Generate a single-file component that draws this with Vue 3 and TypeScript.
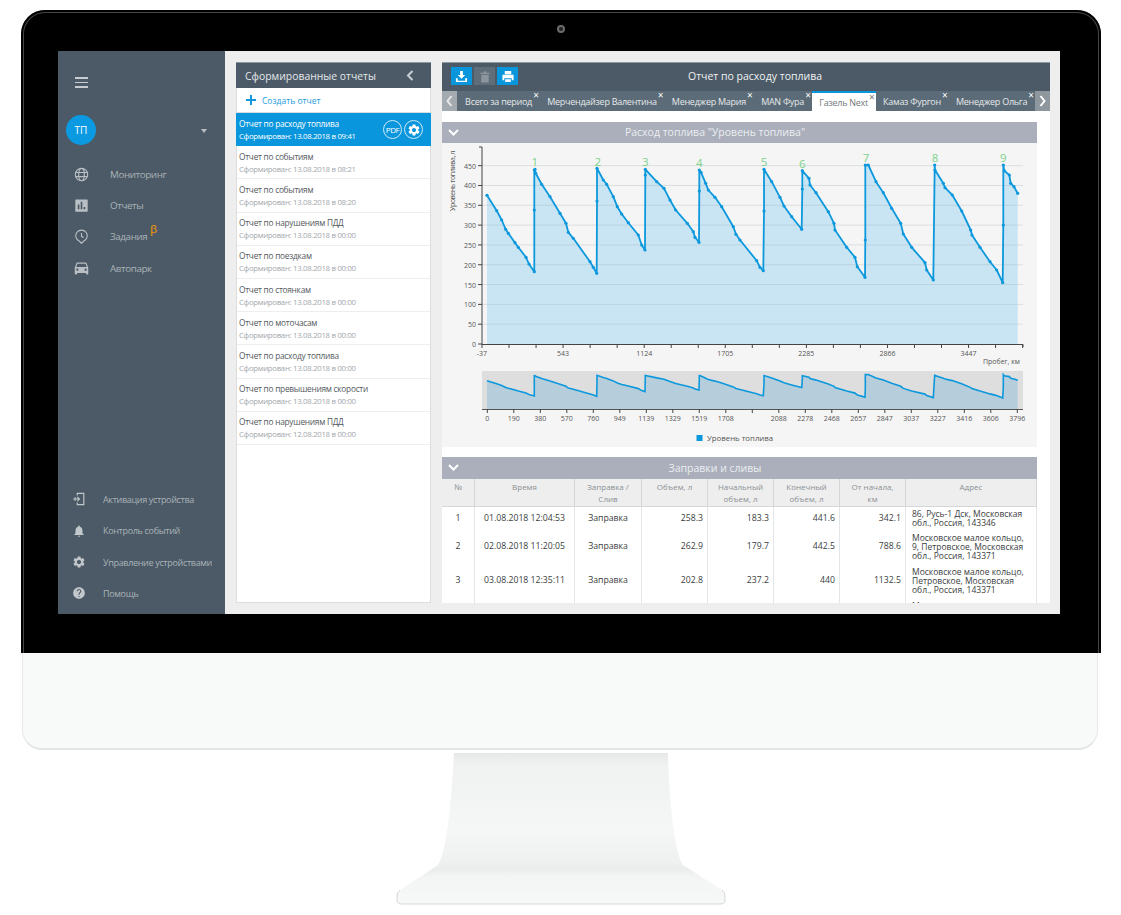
<script setup lang="ts">
interface Report {
  title: string;
  date: string;
}

const gearPath =
  "M19.14 12.94c.04-.3.06-.61.06-.94 0-.32-.02-.64-.07-.94l2.03-1.58c.18-.14.23-.41.12-.61l-1.92-3.32c-.12-.22-.37-.29-.59-.22l-2.39.96c-.5-.38-1.03-.7-1.62-.94l-.36-2.54c-.04-.24-.24-.41-.48-.41h-3.84c-.24 0-.43.17-.47.41l-.36 2.54c-.59.24-1.13.57-1.62.94l-2.39-.96c-.22-.08-.47 0-.59.22L2.74 8.87c-.12.21-.08.47.12.61l2.03 1.58c-.05.3-.09.63-.09.94s.02.64.07.94l-2.03 1.58c-.18.14-.23.41-.12.61l1.92 3.32c.12.22.37.29.59.22l2.39-.96c.5.38 1.03.7 1.62.94l.36 2.54c.05.24.24.41.48.41h3.84c.24 0 .44-.17.47-.41l.36-2.54c.59-.24 1.13-.56 1.62-.94l2.39.96c.22.08.47 0 .59-.22l1.92-3.32c.12-.22.07-.47-.12-.61l-2.01-1.58zM12 15.6c-1.98 0-3.6-1.62-3.6-3.6s1.62-3.6 3.6-3.6 3.6 1.62 3.6 3.6-1.62 3.6-3.6 3.6z";

const reports: Report[] = [
  { title: "Отчет по событиям", date: "Сформирован: 13.08.2018 в 08:21" },
  { title: "Отчет по событиям", date: "Сформирован: 13.08.2018 в 08:20" },
  { title: "Отчет по нарушениям ПДД", date: "Сформирован: 13.08.2018 в 00:00" },
  { title: "Отчет по поездкам", date: "Сформирован: 13.08.2018 в 00:00" },
  { title: "Отчет по стоянкам", date: "Сформирован: 13.08.2018 в 00:00" },
  { title: "Отчет по моточасам", date: "Сформирован: 13.08.2018 в 00:00" },
  { title: "Отчет по расходу топлива", date: "Сформирован: 13.08.2018 в 00:00" },
  { title: "Отчет по превышениям скорости", date: "Сформирован: 13.08.2018 в 00:00" },
  { title: "Отчет по нарушениям ПДД", date: "Сформирован: 12.08.2018 в 00:00" },
];

const tabs = [
  "Всего за период",
  "Мерчендайзер Валентина",
  "Менеджер Мария",
  "MAN Фура",
  "Газель Next",
  "Камаз Фургон",
  "Менеджер Ольга",
];

const rows = [
  { n: 1, time: "01.08.2018 12:04:53", type: "Заправка", vol: "258.3", start: "183.3", end: "441.6", km: "342.1", addr: "86, Русь-1 Дск, Московская обл., Россия, 143346", h: "short" },
  { n: 2, time: "02.08.2018 11:20:05", type: "Заправка", vol: "262.9", start: "179.7", end: "442.5", km: "788.6", addr: "Московское малое кольцо, 9, Петровское, Московская обл., Россия, 143371", h: "tall" },
  { n: 3, time: "03.08.2018 12:35:11", type: "Заправка", vol: "202.8", start: "237.2", end: "440", km: "1132.5", addr: "Московское малое кольцо, Петровское, Московская обл., Россия, 143371", h: "tall" },
];

// line points traced from the picture, in page pixels
const line: [number, number][] = [
  [487, 195.3], [496.7, 210.7], [501.7, 220], [505.7, 229.3], [508.3, 233.3], [515, 242.7], [518.3, 247.3], [526, 257.3], [529, 264], [534.3, 271.7],
  [534.3, 210], [534.3, 170], [535, 169.3], [535.7, 173.3], [541.7, 184.3], [550, 196.7], [560, 213.3], [566, 223.3], [568.3, 232.3], [573.3, 238.3], [590, 261.7], [593.3, 267.3], [596.7, 273.3],
  [597, 201], [597, 168.3], [603.3, 180], [606.7, 184.3], [613.3, 196.7], [617.3, 206.7], [621.7, 214], [628.3, 222.7], [638.3, 235], [641.7, 245], [645, 250],
  [645.3, 175], [645.3, 169.3], [656.7, 181.7], [664, 188.3], [670, 200], [675.7, 210], [687.3, 223.3], [693.3, 231.7], [695, 237.3], [699, 242.3],
  [699.3, 191], [699.3, 170], [701, 172.3], [705.7, 183.3], [708.3, 190], [715, 197.3], [721.7, 206.7], [733.3, 226.7], [736, 234.3], [740, 240], [756.7, 260.7], [760, 267.3], [763.3, 270.7],
  [764, 211], [764, 169.3], [771.7, 181.7], [780, 197.3], [784, 206], [791.7, 216.7], [801.7, 229.3],
  [802.3, 189], [802.3, 170.7], [809, 178.3], [810, 185], [816, 192.7], [828.3, 211.7], [834, 223.3], [835, 230], [846.7, 247.3], [855, 257.3], [857.3, 266.7], [865, 277.3],
  [865.3, 240], [865.3, 165], [868.3, 165], [876, 181.7], [883.3, 192.7], [891.7, 208.3], [900.7, 223.3], [903.3, 234], [911.7, 247.3], [925, 262.7], [926.7, 270], [933.3, 280],
  [934.7, 165], [935, 170], [943.3, 183.3], [945, 187.7], [952.3, 195], [961.7, 211], [970.7, 230], [972, 235], [980, 247.3], [990, 261.7], [996.7, 270], [1002.7, 282.7],
  [1003.3, 225], [1003.3, 165], [1004.3, 170.7], [1009.3, 175], [1010.7, 183.3], [1014, 186.7], [1017.7, 193.3],
];

const toPoints = (pts: [number, number][]) => pts.map(([x, y]) => `${x},${y}`).join(" ");

const mainLine = toPoints(line);
const mainArea = `487,344 ${mainLine} 1017.7,344`;

// the small chart repeats the big one at a fifth of its height
const mini = line.map(([x, y]): [number, number] => [x, +(375 + (y - 167) * 0.2).toFixed(1)]);
const miniLine = toPoints(mini);
const miniArea = `487,409 ${miniLine} 1017.7,409`;

const yTicks = [0, 50, 100, 150, 200, 250, 300, 350, 400, 450].map((v) => ({
  v,
  y: 344 - v * 0.3963,
}));
const xLabels: Record<number, string> = { 0: "-37", 3: "543", 6: "1124", 9: "1705", 12: "2285", 15: "2866", 18: "3447" };
const xTicks = Array.from({ length: 21 }, (_, i) => ({ x: 482 + i * 27.03, label: xLabels[i] }));
const miniLabels = ["0", "190", "380", "570", "760", "949", "1139", "1329", "1519", "1708", "", "2088", "2278", "2468", "2657", "2847", "3037", "3227", "3416", "3606", "3796"];
const miniTicks = miniLabels.map((label, i) => ({ x: 487.3 + i * 26.5, label }));
const refills = [
  { n: 1, x: 534.7, y: 166 },
  { n: 2, x: 597.7, y: 166 },
  { n: 3, x: 645.3, y: 166 },
  { n: 4, x: 699.3, y: 166.5 },
  { n: 5, x: 764, y: 166 },
  { n: 6, x: 802.3, y: 167.5 },
  { n: 7, x: 866, y: 162 },
  { n: 8, x: 935, y: 162 },
  { n: 9, x: 1003.3, y: 162 },
];
</script>

<template>
  <div class="page">
    <div class="bezel">
      <div class="camera"></div>
      <div class="screen">
        <aside class="sidebar">
          <div>
            <div class="burger"><span></span><span></span><span></span></div>
            <div class="user">
              <div class="avatar">ТП</div>
              <div class="caret"></div>
            </div>
            <nav class="menu">
              <a class="menu-item">
                <svg class="menu-icon" viewBox="0 0 16 16" fill="none" stroke="#b9bfc4" stroke-width="1.2">
                  <circle cx="8" cy="8" r="6.6" />
                  <ellipse cx="8" cy="8" rx="3" ry="6.6" />
                  <path d="M1.6 5.8h12.8M1.6 10.2h12.8" />
                </svg>
                <span>Мониторинг</span>
              </a>
              <a class="menu-item">
                <svg class="menu-icon" viewBox="0 0 16 16">
                  <path fill="#b9bfc4" fill-rule="evenodd" d="M2 1.5h12a.6.6 0 0 1 .6.6v12a.6.6 0 0 1-.6.6H2a.6.6 0 0 1-.6-.6V2.1a.6.6 0 0 1 .6-.6zM4 7v5h1.8V7zm3.1-3v8h1.8V4zm3.1 5.5V12H12V9.5z" />
                </svg>
                <span>Отчеты</span>
              </a>
              <a class="menu-item">
                <svg class="menu-icon" viewBox="0 0 16 16" fill="none" stroke="#b9bfc4" stroke-width="1.2">
                  <path d="M8 15.2 5.5 12.8A6.1 6.1 0 1 1 10.5 12.8z" />
                  <path d="M8 4.2V7.8L10.3 9" />
                </svg>
                <span>Задания</span>
                <sup class="beta">β</sup>
              </a>
              <a class="menu-item">
                <svg class="menu-icon" viewBox="2 3 20 20">
                  <path fill="#b9bfc4" d="M18.92 6.01C18.72 5.42 18.16 5 17.5 5h-11c-.66 0-1.21.42-1.42 1.01L3 12v8c0 .55.45 1 1 1h1c.55 0 1-.45 1-1v-1h12v1c0 .55.45 1 1 1h1c.55 0 1-.45 1-1v-8l-2.08-5.99zM6.5 16c-.83 0-1.5-.67-1.5-1.5S5.67 13 6.5 13s1.5.67 1.5 1.5S7.33 16 6.5 16zm11 0c-.83 0-1.5-.67-1.5-1.5s.67-1.5 1.5-1.5 1.5.67 1.5 1.5-.67 1.5-1.5 1.5zM5 11l1.5-4.5h11L19 11H5z" />
                </svg>
                <span>Автопарк</span>
              </a>
            </nav>
          </div>
          <nav class="menu-bottom">
            <a class="bottom-item">
              <svg class="bottom-icon" viewBox="0 0 16 16" fill="none" stroke="#c2c7cb" stroke-width="1.3">
                <path d="M6 4V1.5h7.5v13H6V12" />
                <path d="M1.5 8h7M6 5.5 8.5 8 6 10.5M3.5 6v4" />
              </svg>
              <span>Активация устройства</span>
            </a>
            <a class="bottom-item">
              <svg class="bottom-icon" viewBox="0 0 24 24">
                <path fill="#c2c7cb" d="M12 22c1.1 0 2-.9 2-2h-4c0 1.1.89 2 2 2zm6-6v-5c0-3.07-1.64-5.64-4.5-6.32V4c0-.83-.67-1.5-1.5-1.5s-1.5.67-1.5 1.5v.68C7.63 5.36 6 7.92 6 11v5l-2 2v1h16v-1l-2-2z" />
              </svg>
              <span>Контроль событий</span>
            </a>
            <a class="bottom-item">
              <svg class="bottom-icon" viewBox="0 0 24 24"><path fill="#c2c7cb" :d="gearPath" /></svg>
              <span>Управление устройствами</span>
            </a>
            <a class="bottom-item">
              <svg class="bottom-icon" viewBox="0 0 24 24">
                <path fill="#c2c7cb" d="M12 2C6.48 2 2 6.48 2 12s4.48 10 10 10 10-4.48 10-10S17.52 2 12 2zm1 17h-2v-2h2v2zm2.07-7.75l-.9.92C13.45 12.9 13 13.5 13 15h-2v-.5c0-1.1.45-2.1 1.17-2.83l1.24-1.26c.37-.36.59-.86.59-1.41 0-1.1-.9-2-2-2s-2 .9-2 2H8c0-2.21 1.79-4 4-4s4 1.79 4 4c0 .88-.36 1.68-.93 2.25z" />
              </svg>
              <span>Помощь</span>
            </a>
          </nav>
        </aside>

        <main class="content">
          <section class="reports">
            <header class="reports-head">
              <span>Сформированные отчеты</span>
              <svg width="8" height="11" viewBox="0 0 8 11" fill="none" stroke="#c9cfd4" stroke-width="2"><path d="M6.5 1 2 5.5 6.5 10" /></svg>
            </header>
            <div class="create">
              <svg width="10" height="10" viewBox="0 0 10 10"><path fill="#1497dc" d="M4 0h2v4h4v2H6v4H4V6H0V4h4z" /></svg>
              <span>Создать отчет</span>
            </div>
            <div class="report report-active">
              <div>
                <div class="report-title">Отчет по расходу топлива</div>
                <div class="report-date">Сформирован: 13.08.2018 в 09:41</div>
              </div>
              <div class="report-actions">
                <span class="round-btn pdf">PDF</span>
                <span class="round-btn">
                  <svg width="14" height="14" viewBox="0 0 24 24"><path fill="#fff" :d="gearPath" /></svg>
                </span>
              </div>
            </div>
            <div v-for="(r, i) in reports" :key="i" class="report">
              <div>
                <div class="report-title">{{ r.title }}</div>
                <div class="report-date">{{ r.date }}</div>
              </div>
            </div>
          </section>

          <section class="detail">
            <header class="detail-head">
              <div class="tools">
                <button class="tool">
                  <svg width="13" height="13" viewBox="0 0 14 14" fill="#fff"><path d="M5.5 1h3v4.5H11L7 9.5 3 5.5h2.5z" /><path d="M1 9h2v2.5h8V9h2v4H1z" /></svg>
                </button>
                <button class="tool tool-off">
                  <svg width="12" height="13" viewBox="0 0 12 14" fill="#8b959c"><path d="M1 3h10v1.3H1zM4.5 1.500h3V3h-3zM2 5h8v8.500H2z" /></svg>
                </button>
                <button class="tool">
                  <svg width="14" height="13" viewBox="0 0 14 14" fill="#fff"><path fill-rule="evenodd" d="M3.5 1h7v3.500h-7zM1 5h12v6h-2V9H3v2H1zM4 10h6v3H4z" /></svg>
                </button>
              </div>
              <h1 class="detail-title">Отчет по расходу топлива</h1>
            </header>
            <div class="tabs">
              <div class="tab-arrow">
                <svg width="7" height="12" viewBox="0 0 7 12" fill="none" stroke="#e6e8ea" stroke-width="2"><path d="M5.5 1 1.5 6l4 5" /></svg>
              </div>
              <div class="tab-list">
                <div v-for="(t, i) in tabs" :key="t" class="tab" :class="{ 'tab-active': i === 4 }">
                  {{ t }}<span class="tab-x">×</span>
                </div>
              </div>
              <div class="tab-arrow tab-arrow-right">
                <svg width="7" height="12" viewBox="0 0 7 12" fill="none" stroke="#fff" stroke-width="2"><path d="m1.5 1 4 5-4 5" /></svg>
              </div>
            </div>
            <div class="detail-body">
              <div class="section-head">
                <svg class="section-chev" width="11" height="7" viewBox="0 0 11 7" fill="none" stroke="#fff" stroke-width="2"><path d="m1 1 4.5 4.500L10 1" /></svg>
                Расход топлива "Уровень топлива"
              </div>
              <svg class="chart" viewBox="441 143 596 304" width="596" height="304">
                <rect x="441" y="143" width="596" height="304" fill="#f5f5f5" />
                <polygon :points="mainArea" fill="#c9e5f3" />
                <line v-for="t in yTicks.slice(1)" :key="t.v" x1="482" x2="1023" :y1="t.y" :y2="t.y" stroke="#9aa5ab" stroke-opacity=".28" />
                <polyline :points="mainLine" fill="none" stroke="#0c98dc" stroke-width="1.8" stroke-linejoin="round" />
                <circle v-for="(p, i) in line" :key="i" :cx="p[0]" :cy="p[1]" r="1.6" fill="#0c98dc" />
                <text v-for="r in refills" :key="r.n" :x="r.x" :y="r.y" class="refill">{{ r.n }}</text>

                <path d="M482 147h-3M482 147V344.5H1023V347" fill="none" stroke="#444" stroke-width="1" />
                <g v-for="t in yTicks" :key="t.v">
                  <line x1="478" x2="482" :y1="t.y" :y2="t.y" stroke="#444" />
                  <text x="476" :y="t.y + 3" class="tick" text-anchor="end">{{ t.v }}</text>
                </g>
                <text class="tick tick-title" transform="translate(455 181) rotate(-90)" text-anchor="middle">Уровень топлива, л</text>
                <g v-for="t in xTicks" :key="t.x">
                  <line :x1="t.x" :x2="t.x" y1="344" y2="348" stroke="#444" />
                  <text v-if="t.label" :x="t.x" y="356" class="tick" text-anchor="middle">{{ t.label }}</text>
                </g>
                <text x="1020" y="364" class="tick" text-anchor="end">Пробег, км</text>

                <rect x="482" y="371" width="541" height="38" fill="#dedede" />
                <polygon :points="miniArea" fill="#b6cddb" />
                <polyline :points="miniLine" fill="none" stroke="#0c98dc" stroke-width="1.6" />
                <line x1="482" x2="1023" y1="409.5" y2="409.5" stroke="#555" />
                <g v-for="t in miniTicks" :key="t.x">
                  <line :x1="t.x" :x2="t.x" y1="409" y2="413" stroke="#444" />
                  <text v-if="t.label" :x="t.x" y="421" class="tick" text-anchor="middle">{{ t.label }}</text>
                </g>
                <rect x="696.5" y="435" width="6" height="6" fill="#0c98dc" />
                <text x="707" y="441" class="legend">Уровень топлива</text>
              </svg>
              <div class="section-head section-head-table">
                <svg class="section-chev" width="11" height="7" viewBox="0 0 11 7" fill="none" stroke="#fff" stroke-width="2"><path d="m1 1 4.5 4.500L10 1" /></svg>
                Заправки и сливы
              </div>
              <table class="refuels">
                <colgroup>
                  <col style="width: 33px" /><col style="width: 100px" /><col style="width: 67px" /><col style="width: 66px" />
                  <col style="width: 66px" /><col style="width: 66px" /><col style="width: 66px" /><col style="width: 131px" />
                </colgroup>
                <thead>
                  <tr>
                    <th>№</th>
                    <th>Время</th>
                    <th>Заправка /<br />Слив</th>
                    <th>Объем, л</th>
                    <th>Начальный<br />объем, л</th>
                    <th>Конечный<br />объем, л</th>
                    <th>От начала,<br />км</th>
                    <th>Адрес</th>
                  </tr>
                </thead>
                <tbody>
                  <tr v-for="r in rows" :key="r.n" :class="r.h">
                    <td class="center">{{ r.n }}</td>
                    <td class="center">{{ r.time }}</td>
                    <td class="center">{{ r.type }}</td>
                    <td class="num">{{ r.vol }}</td>
                    <td class="num">{{ r.start }}</td>
                    <td class="num">{{ r.end }}</td>
                    <td class="num">{{ r.km }}</td>
                    <td class="addr">{{ r.addr }}</td>
                  </tr>
                  <tr class="tall">
                    <td></td><td></td><td></td><td></td><td></td><td></td><td></td>
                    <td class="addr addr-cut">Московское малое кольцо</td>
                  </tr>
                </tbody>
              </table>
            </div>
          </section>
        </main>
      </div>
    </div>

    <div class="chin"></div>

    <svg class="stand" width="330" height="153" viewBox="396 753 330 153">
      <defs>
        <linearGradient id="standFill" x1="0" y1="0" x2="0" y2="1">
          <stop offset="0" stop-color="#e6e7e7" />
          <stop offset=".08" stop-color="#f0f1f1" />
          <stop offset=".5" stop-color="#f5f6f6" />
          <stop offset=".72" stop-color="#eff0f0" />
          <stop offset=".77" stop-color="#ebecec" />
          <stop offset=".82" stop-color="#f3f4f4" />
          <stop offset="1" stop-color="#f7f8f8" />
        </linearGradient>
      </defs>
      <path
        d="M454 753H668C669 790 673 850 683 865L722 890Q725 892 725 896V900Q725 904 720 904H402Q397 904 397 900V896Q397 892 400 890L438 865C448 850 452 790 454 753Z"
        fill="url(#standFill)"
      />
      <path d="M722 890Q725 892 725 896V900Q725 904 720 904H402Q397 904 397 900V896Q397 892 400 890" fill="none" stroke="#d6d8d8" />
    </svg>
  </div>
</template>

<style scoped>
.page {
  width: 1121px;
  height: 915px;
  padding-top: 10px;
  box-sizing: border-box;
  background: #fff;
  font-family: "Open Sans", "Noto Sans", sans-serif;
  overflow: hidden;
}

.bezel {
  position: relative;
  width: 1080px;
  height: 643px;
  margin-left: 21px;
  padding: 41px 41px 0 37px;
  box-sizing: border-box;
  background: #000;
  border-radius: 24px 24px 0 0;
  overflow: hidden;
}

.bezel::before {
  content: "";
  position: absolute;
  inset: 0 0 -8px 0;
  border-radius: 24px 24px 0 0;
  box-shadow: inset 0 0 0 2px #000, inset 0 0 0 3px #454545;
}

.camera {
  position: absolute;
  top: 15px;
  left: 536px;
  width: 4px;
  height: 4px;
  border: 2px solid #6b6b6b;
  border-radius: 50%;
  background: #222;
}

.screen {
  position: relative;
  display: flex;
  width: 1002px;
  height: 563px;
  background: #eee;
  overflow: hidden;
}

.sidebar {
  display: flex;
  flex-direction: column;
  justify-content: space-between;
  flex: none;
  width: 167px;
  background: #4b5a66;
  color: #aab2b8;
}

.burger {
  display: flex;
  flex-direction: column;
  gap: 3px;
  width: 13px;
  margin: 26px 0 0 17px;
}

.burger span {
  display: block;
  height: 1.5px;
  background: #c8ccd0;
}

.user {
  display: flex;
  align-items: center;
  justify-content: space-between;
  margin: 27px 18px 0 8px;
}

.avatar {
  display: flex;
  align-items: center;
  justify-content: center;
  width: 30px;
  height: 30px;
  border-radius: 50%;
  background: #0b9ae2;
  color: #fff;
  font-size: 10px;
}

.caret {
  width: 0;
  height: 0;
  border: 3.5px solid transparent;
  border-top: 4px solid #b9bfc4;
  border-bottom: 0;
  margin-top: 2px;
}

.menu {
  margin-top: 14px;
}

.menu-item {
  position: relative;
  display: flex;
  align-items: center;
  gap: 21px;
  height: 31.3px;
  padding-left: 16px;
  font-size: 9.8px;
  letter-spacing: -0.4px;
}

.menu-icon {
  flex: none;
  width: 15px;
  height: 15px;
}

.beta {
  position: absolute;
  left: 92px;
  top: 2px;
  color: #d98c1c;
  font-size: 11px;
  font-weight: 600;
  line-height: 1;
}

.menu-bottom {
  padding-bottom: 5px;
}

.bottom-item {
  display: flex;
  align-items: center;
  gap: 17px;
  height: 31.3px;
  padding-left: 14px;
  font-size: 9px;
  letter-spacing: -0.33px;
  white-space: nowrap;
  color: #aab2b8;
}

.bottom-icon {
  flex: none;
  width: 14px;
  height: 14px;
}

.content {
  display: flex;
  gap: 11px;
  padding: 11px 10px 11px 11px;
  flex: 1;
  min-width: 0;
}

.reports {
  flex: none;
  width: 195px;
  background: #fff;
  border: 1px solid #ddd;
  border-top: 0;
  box-sizing: border-box;
}

.reports-head {
  display: flex;
  align-items: center;
  justify-content: space-between;
  height: 26px;
  padding: 0 17px 0 9px;
  margin: 0 -1px;
  background: #4b5a66;
  border-top: 1px solid #8c979f;
  box-sizing: border-box;
  color: #e4e7ea;
  font-size: 10.4px;
}

.create {
  display: flex;
  align-items: center;
  gap: 6px;
  height: 25px;
  padding-left: 9px;
  color: #1e9bdc;
  font-size: 8.5px;
  border-bottom: 1px solid #d8dcdf;
  box-sizing: border-box;
}

.report {
  display: flex;
  align-items: center;
  justify-content: space-between;
  height: 33.2px;
  padding: 1px 2px 0;
  box-sizing: border-box;
  border-bottom: 1px solid #eee;
}

.report-title {
  font-size: 8.3px;
  letter-spacing: -0.25px;
  line-height: 13px;
  color: #54595d;
}

.report-date {
  font-size: 7.8px;
  letter-spacing: -0.3px;
  line-height: 13px;
  color: #a3a8ac;
}

.report-active {
  margin: 0 -1px;
  padding: 0 8px 0 3px;
  background: #0a96dc;
  border-bottom: 0;
}

.report-active .report-title,
.report-active .report-date {
  color: #fff;
}

.report-actions {
  display: flex;
  gap: 2px;
}

.round-btn {
  display: flex;
  align-items: center;
  justify-content: center;
  width: 19px;
  height: 19px;
  border: 1px solid #cfe9f7;
  border-radius: 50%;
  box-sizing: border-box;
  color: #fff;
}

.pdf {
  font-size: 8px;
  letter-spacing: -0.4px;
}

.detail {
  display: flex;
  flex-direction: column;
  width: 608px;
  flex: none;
  background: #fff;
  overflow: hidden;
}

.detail-head {
  position: relative;
  display: flex;
  align-items: center;
  justify-content: center;
  flex: none;
  height: 29px;
  padding-bottom: 3px;
  background: #4b5a66;
  border-top: 1px solid #8c979f;
  box-sizing: border-box;
}

.tools {
  position: absolute;
  left: 9px;
  top: 4px;
  display: flex;
  gap: 2px;
}

.tool {
  display: flex;
  align-items: center;
  justify-content: center;
  width: 21px;
  height: 18px;
  padding: 0;
  border: 0;
  background: #0a96dc;
}

.tool-off {
  background: #606e79;
}

.detail-title {
  margin: 0 0 0 18px;
  font-size: 10.5px;
  font-weight: 400;
  color: #f0f2f3;
}

.tabs {
  display: flex;
  flex: none;
  height: 20px;
  background: #5b6b77;
}

.tab-arrow {
  display: flex;
  align-items: center;
  justify-content: center;
  flex: none;
  width: 15px;
  background: #a3abb1;
}

.tab-arrow-right {
  margin-left: auto;
  background: #8e979e;
}

.tab-list {
  display: flex;
  padding-left: 0.5px;
}

.tab {
  position: relative;
  display: flex;
  align-items: center;
  padding: 0 7.6px;
  font-size: 9px;
  letter-spacing: -0.27px;
  color: #e6e9eb;
  white-space: nowrap;
}

.tab-active {
  background: #fff;
  border-top: 2px solid #0a96dc;
  box-sizing: border-box;
  color: #75797c;
}

.tab-x {
  position: absolute;
  top: -1px;
  right: 1px;
  font-size: 10px;
  line-height: 10px;
  color: #fff;
}

.tab-active .tab-x {
  top: -1px;
  color: #75797c;
}

.detail-body {
  flex: 1;
  min-height: 0;
  margin-top: 11px;
  width: 596px;
  margin-left: -1px;
}

.section-head {
  position: relative;
  height: 21px;
  padding-right: 48px;
  line-height: 21px;
  background: #aaafbb;
  color: #eceef1;
  font-size: 10.5px;
  text-align: center;
}

.section-head-table {
  height: 22px;
  line-height: 22px;
  margin-top: 10px;
}

.section-chev {
  position: absolute;
  left: 7px;
  top: 7px;
}

.chart {
  display: block;
}

.refill {
  fill: #7dd28b;
  font-size: 11.5px;
  text-anchor: middle;
}

.tick {
  fill: #555;
  font-size: 7px;
}

.tick-title {
  letter-spacing: -0.4px;
}

.legend {
  fill: #555;
  font-size: 7.8px;
}

.refuels {
  width: 595px;
  border-collapse: collapse;
  table-layout: fixed;
}

.refuels th {
  height: 27px;
  padding: 2px 2px 0;
  vertical-align: top;
  background: #eee;
  border: 1px solid #d3d7da;
  border-top: 0;
  box-sizing: border-box;
  color: #8c9195;
  font-size: 8px;
  font-weight: 400;
  line-height: 12px;
}

.refuels td {
  padding: 0 4px;
  border-left: 1px solid #e3e6e8;
  border-right: 1px solid #e3e6e8;
  color: #3a3d40;
  font-size: 8.7px;
  overflow: hidden;
}

.refuels .short {
  height: 23px;
}

.refuels .tall {
  height: 34px;
}

.center {
  text-align: center;
}

.num {
  text-align: right;
}

.refuels .addr {
  padding: 0 7px 0 6px;
  line-height: 9px;
  font-size: 8.5px;
}

.refuels .addr-cut {
  vertical-align: top;
  padding-top: 4px;
}

.chin {
  width: 1076px;
  height: 97px;
  margin-left: 22px;
  box-sizing: border-box;
  background: #f8fafa;
  border: 1px solid #e6e9e9;
  border-top: 0;
  border-bottom: 2px solid #e3e6e6;
  border-radius: 0 0 20px 20px;
}

.stand {
  display: block;
  margin: 3px 0 0 396px;
}
</style>

<style>
html,
body {
  margin: 0;
  background: #fff;
}
</style>
